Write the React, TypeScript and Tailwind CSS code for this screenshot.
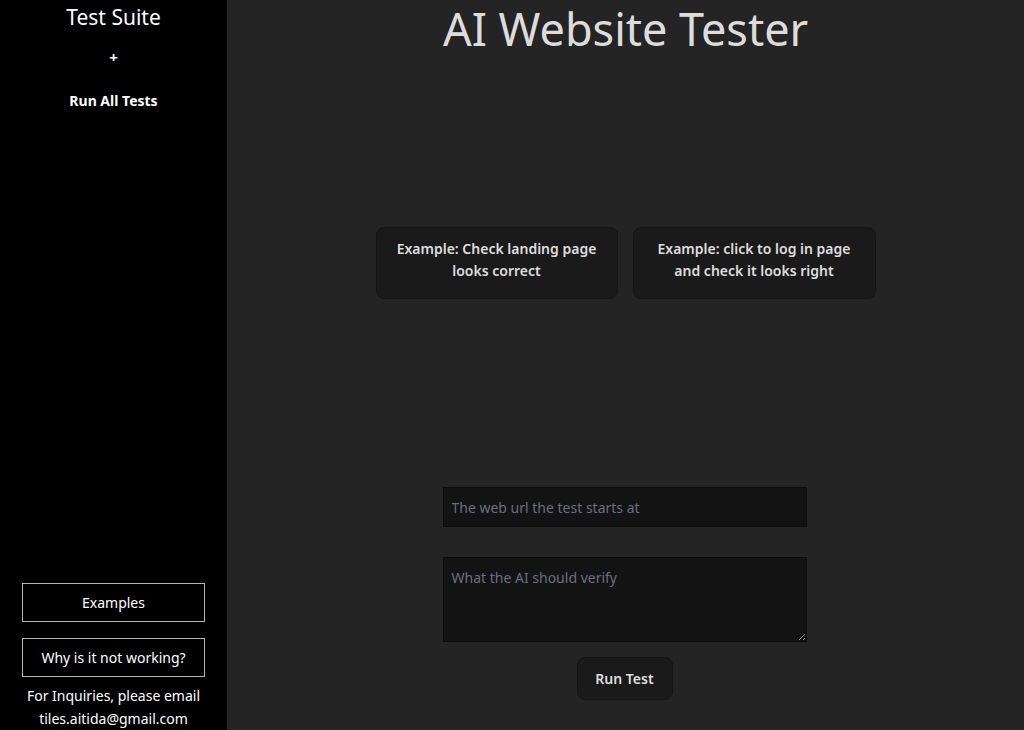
const font = { fontFamily: '"Noto Sans", "Open Sans", sans-serif' };

function Sidebar() {
  return (
    <aside className="flex h-full w-[227px] shrink-0 flex-col items-center bg-black text-white">
      <h2 className="mt-[2px] text-[21px] leading-[30px]">Test Suite</h2>
      <button className="mt-[15px] text-[15px] font-bold leading-[20px]">+</button>
      <button className="mt-[24px] text-[14px] font-bold leading-[20px]">Run All Tests</button>

      <div className="mt-auto flex w-full flex-col items-center px-[22px]">
        <button className="h-[39px] w-full border border-[#b5b5b5] text-[14px] text-white">
          Examples
        </button>
        <button className="mt-[16px] h-[39px] w-full border border-[#b5b5b5] text-[14px] text-white">
          Why is it not working?
        </button>
        <p className="mt-[7px] whitespace-nowrap text-center text-[14px] leading-[23px]">
          For Inquiries, please email
          <br />
          tiles.aitida@gmail.com
        </p>
      </div>
    </aside>
  );
}

export default function App() {
  return (
    <div className="flex h-[730px] w-full overflow-hidden" style={font}>
      <Sidebar />

      <main className="flex flex-1 flex-col items-center bg-[#242424] text-white/[0.87]">
        <h1 className="mt-[1px] text-[45px] leading-[56px]">AI Website Tester</h1>

        <div className="mt-[170px] flex gap-[15px]">
          <button className="h-[72px] w-[242px] rounded-lg border border-[#151515] bg-[#1a1a1a] px-3 pb-[6px] text-[14px] font-semibold leading-[22px]">
            Example: Check landing page looks correct
          </button>
          <button className="h-[72px] w-[243px] rounded-lg border border-[#151515] bg-[#1a1a1a] px-3 pb-[6px] text-[14px] font-semibold leading-[22px]">
            Example: click to log in page and check it looks right
          </button>
        </div>

        <div className="mt-auto flex flex-col items-center pb-[30px] pr-[2px]">
          <input
            className="h-[40px] w-[364px] border border-[#0c0c0c] bg-[#131313] px-2 text-[14px] text-white outline-none placeholder:text-[#6b6f80]"
            placeholder="The web url the test starts at"
          />
          <textarea
            className="mt-[30px] h-[85px] w-[364px] border border-[#0c0c0c] bg-[#131313] px-2 py-[9px] text-[14px] text-white outline-none placeholder:text-[#6b6f80]"
            placeholder="What the AI should verify"
          />
          <button className="mt-[15px] h-[43px] w-[96px] rounded-lg border border-[#151515] bg-[#1a1a1a] text-[14px] font-semibold">
            Run Test
          </button>
        </div>
      </main>
    </div>
  );
}
